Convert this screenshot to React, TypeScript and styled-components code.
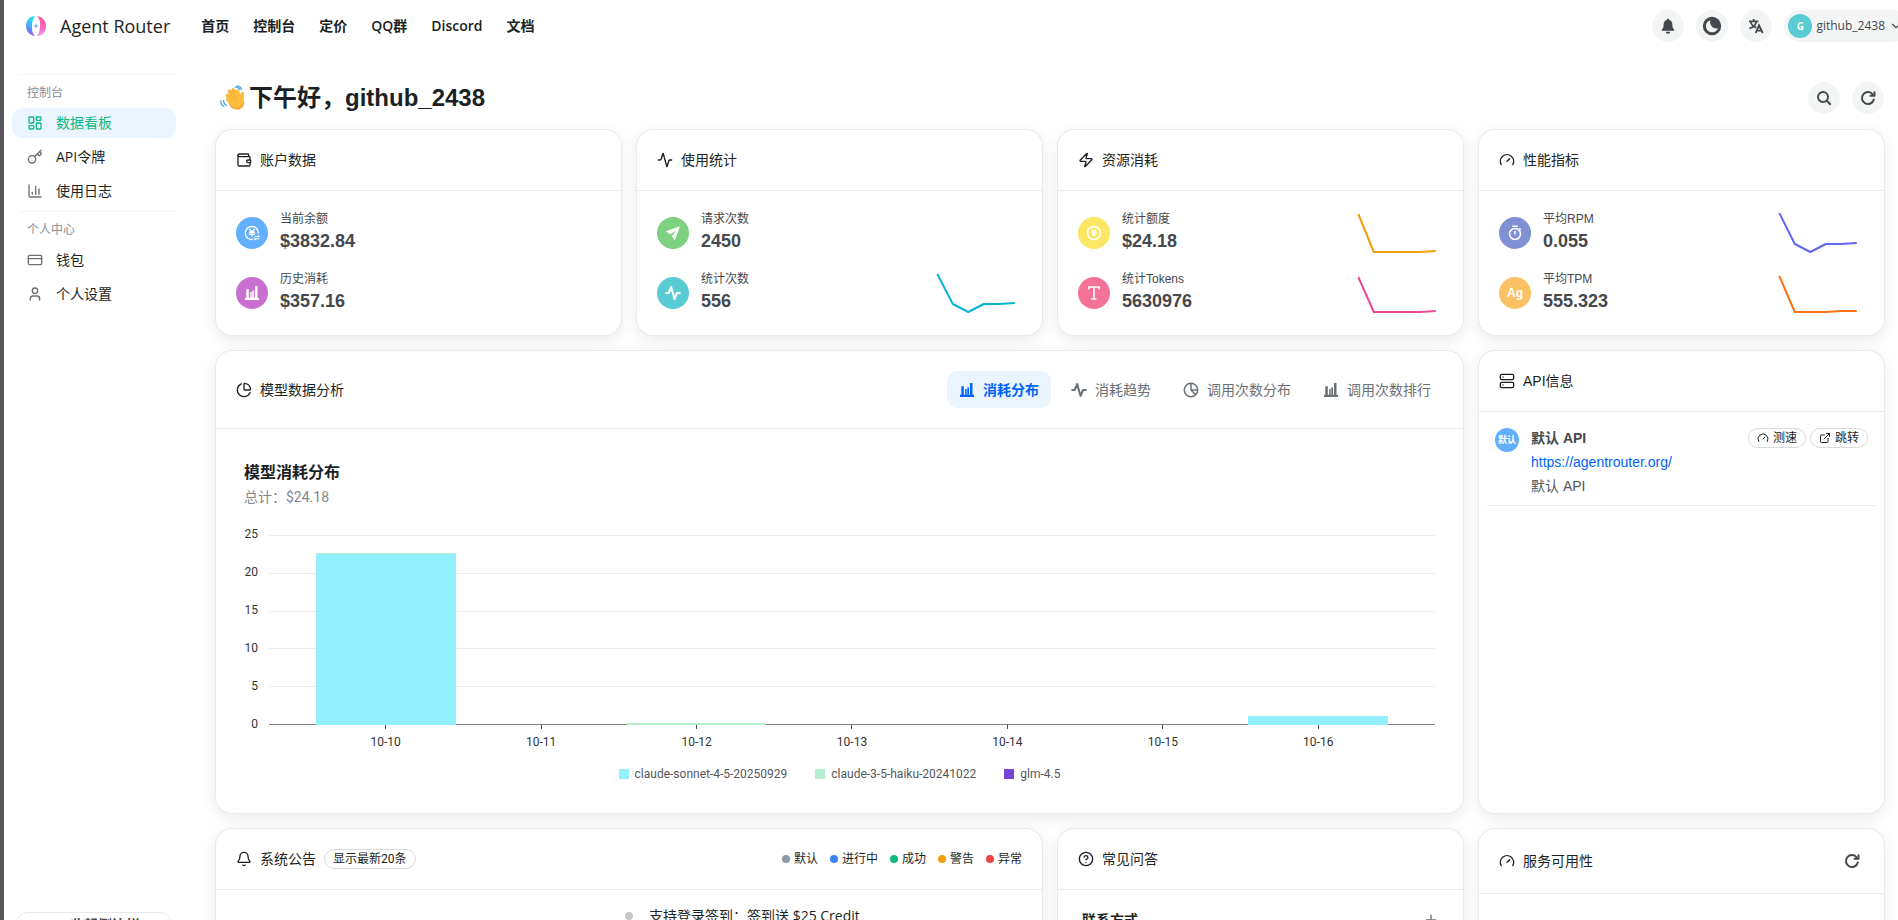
import React from "react";
import styled, { createGlobalStyle } from "styled-components";
import {
  Activity,
  Bell,
  ChartColumn,
  ChartPie,
  ChevronDown,
  ChevronLeft,
  CircleQuestionMark,
  CreditCard,
  ExternalLink,
  Gauge,
  Key,
  LayoutDashboard,
  Plus,
  Server,
  User,
  Wallet,
  Zap,
} from "lucide-react";

const sans = `"Liberation Sans", "Noto Sans CJK SC", sans-serif`;
const ui = `"Open Sans", "Noto Sans CJK SC", sans-serif`;
const chartFont = `Roboto, "Noto Sans CJK SC", sans-serif`;

const GlobalStyle = createGlobalStyle`
  * { box-sizing: border-box; }
  body { margin: 0; background: #fff; color: #1c1f23; font: 400 14px/20px ${sans}; }
  button { font: inherit; color: inherit; background: none; border: 0; padding: 0; cursor: pointer; }
  a { color: inherit; text-decoration: none; }
  h1, h2, h3, p, ul, dl, dd { margin: 0; padding: 0; font: inherit; list-style: none; }
  svg { display: block; flex: none; }
`;

/* ---------- page frame ---------- */

const Page = styled.div`
  height: 100vh;
  overflow: hidden;
  border-left: 4px solid #57565c;
`;

const Header = styled.header`
  display: flex;
  align-items: center;
  height: 52px;
  padding-left: 20px;
  font-family: ${ui};
`;

const Brand = styled.a`
  display: flex;
  align-items: center;
  gap: 12px;
  font-size: 18px;
  line-height: 24px;
  font-weight: 500;
`;

const TopNav = styled.nav`
  display: flex;
  gap: 24px;
  margin-left: 31px;
  font-weight: 600;
  font-size: 14px;
`;

const HeaderActions = styled.div`
  display: flex;
  gap: 12px;
  margin-left: auto;
  margin-right: -10px;
`;

const RoundButton = styled.button`
  display: flex;
  align-items: center;
  justify-content: center;
  width: 32px;
  height: 32px;
  border-radius: 50%;
  background: #f3f5f5;
  color: #45484c;
`;

const UserButton = styled.button`
  display: flex;
  align-items: center;
  gap: 4px;
  height: 32px;
  padding: 0 5px 0 4px;
  border-radius: 16px;
  background: #f3f5f5;
  color: #45484c;
  font-size: 12px;
  font-weight: 500;
`;

const Avatar = styled.span<{ $size: number; $color: string; $font?: number }>`
  display: flex;
  align-items: center;
  justify-content: center;
  flex: none;
  width: ${(p) => p.$size}px;
  height: ${(p) => p.$size}px;
  border-radius: 50%;
  background: ${(p) => p.$color};
  color: #fff;
  font-size: ${(p) => p.$font ?? 12}px;
  font-weight: 700;
`;

const Columns = styled.div`
  display: flex;
`;

/* ---------- sidebar ---------- */

const Sidebar = styled.aside`
  flex: none;
  width: 180px;
  padding: 22px 8px 0;
  font-family: ${ui};
`;

const SideMenu = styled.nav`
  display: grid;
  align-content: start;
  gap: 1px;
  min-height: calc(100vh - 82px);
`;

const SideGroup = styled.section`
  border-top: 1px solid #f5f5f6;
  margin-left: 8px;
  padding-top: 8px;
`;

const SideLabel = styled.h2`
  padding: 0 7px;
  margin-bottom: 5px;
  font-size: 12px;
  color: #888d92;
`;

const SideLink = styled.a<{ $active?: boolean }>`
  display: flex;
  align-items: center;
  gap: 13px;
  height: 30px;
  margin: 0 0 4px -8px;
  padding-left: 15px;
  border-radius: 10px;
  background: ${(p) => (p.$active ? "#eaf5ff" : "transparent")};
  color: ${(p) => (p.$active ? "#10b981" : "#1c1f23")};
  svg { color: ${(p) => (p.$active ? "#10b981" : "#6b7075")}; }
`;

const CollapseButton = styled.button`
  display: flex;
  align-items: center;
  justify-content: center;
  gap: 6px;
  width: 156px;
  height: 26px;
  margin-left: 4px;
  border: 1px solid #e6e8ea;
  border-radius: 12px;
  font-weight: 600;
  color: #45484c;
`;

/* ---------- main area ---------- */

const Main = styled.main`
  flex: 1;
  min-width: 0;
  padding: 30px 14px 0 32px;
`;

const Greeting = styled.div`
  display: flex;
  align-items: center;
  gap: 12px;
  margin-bottom: 16px;
`;

const GreetingTitle = styled.h1`
  display: flex;
  align-items: center;
  gap: 4px;
  margin-right: auto;
  padding-left: 3px;
  font-size: 24px;
  line-height: 32px;
  font-weight: 700;
`;

const CardGrid = styled.div`
  display: grid;
  grid-template-columns: repeat(4, minmax(0, 1fr));
  gap: 16px;
`;

const Card = styled.section<{ $span?: number }>`
  grid-column: span ${(p) => p.$span ?? 1};
  border-radius: 16px;
  background: #fff;
  box-shadow: 0 0 0 1px #e9eaea, 0 4px 16px rgba(0, 0, 0, 0.09);
`;

const CardHeader = styled.header`
  display: flex;
  align-items: center;
  justify-content: space-between;
  padding: 20px;
  border-bottom: 1px solid #e9eaeb;
`;

const CardTitle = styled.h2`
  display: flex;
  align-items: center;
  gap: 8px;
`;

const StatList = styled.dl`
  display: grid;
  gap: 16px;
  padding: 20px;
`;

const StatRow = styled.div`
  display: flex;
  align-items: center;
  gap: 12px;
  height: 44px;
`;

const StatText = styled.div`
  flex: 1;
  color: #45484c;
  dt { font-size: 12px; line-height: 16px; }
  dd { font-size: 18px; line-height: 28px; font-weight: 700; }
`;

/* ---------- model analysis ---------- */

const Tabs = styled.div`
  display: flex;
  gap: 8px;
`;

const Tab = styled.button<{ $active?: boolean }>`
  display: flex;
  align-items: center;
  gap: 8px;
  height: 37px;
  padding: 0 12px;
  border-radius: 10px;
  background: ${(p) => (p.$active ? "#eaf5ff" : "transparent")};
  color: ${(p) => (p.$active ? "#0064fa" : "#6b7075")};
  font-weight: ${(p) => (p.$active ? 700 : 400)};
`;

const ChartBody = styled.div`
  padding: 32px 28px 31px;
  font-family: ${chartFont};
`;

const ChartTitle = styled.h3`
  font-size: 16px;
  line-height: 24px;
  font-weight: 700;
`;

const ChartSubtitle = styled.p`
  margin: 1px 0 27px;
  line-height: 22px;
  color: #84878b;
`;

const Plot = styled.div`
  display: grid;
  grid-template-columns: 14px minmax(0, 1fr);
  column-gap: 11px;
  font-size: 12px;
  line-height: 16px;
`;

const YAxis = styled.div`
  display: flex;
  flex-direction: column;
  justify-content: space-between;
  margin: -9px 0 -7px;
  text-align: right;
  color: #333;
`;

const PlotArea = styled.div`
  display: grid;
  height: 190px;
  > * { grid-area: 1 / 1; }
`;

const GridLines = styled.div`
  display: flex;
  flex-direction: column;
  justify-content: space-between;
  i { height: 1px; background: #ececed; }
  i:last-child { background: #7f8184; }
`;

const Bands = styled.div`
  display: flex;
  padding: 0 39px;
`;

const Band = styled.div`
  flex: 1;
  display: flex;
  flex-direction: column;
  align-items: center;
  justify-content: flex-end;
`;

const Bar = styled.div<{ $color: string }>`
  flex: none;
  width: 90%;
  min-height: 1px;
  background: ${(p) => p.$color};
`;

const XLabels = styled(Bands)`
  grid-column: 2;
`;

const XLabel = styled.span`
  flex: 1;
  display: flex;
  flex-direction: column;
  align-items: center;
  gap: 5px;
  color: #333;
  &::before { content: ""; width: 1px; height: 4px; background: #45484c; }
`;

const ChartLegend = styled.ul`
  display: flex;
  justify-content: center;
  gap: 28px;
  margin-top: 16px;
  font-size: 12px;
  line-height: 16px;
  color: #55585c;
  li { display: flex; align-items: center; gap: 6px; }
`;

const Swatch = styled.i<{ $color: string }>`
  width: 10px;
  height: 10px;
  background: ${(p) => p.$color};
`;

/* ---------- API info ---------- */

const ApiItem = styled.div`
  display: flex;
  gap: 12px;
  margin: 8px;
  padding: 8px 8px 9px;
  border-bottom: 1px solid #e9eaeb;
`;

const ApiText = styled.div`
  flex: 1;
  display: grid;
  gap: 4px;
  color: #55585c;
  strong { color: #45484c; }
  a { color: #0064fa; }
`;

const TagRow = styled.div`
  display: flex;
  gap: 4px;
`;

const Tag = styled.button`
  display: flex;
  align-items: center;
  gap: 4px;
  height: 20px;
  padding: 0 8px;
  border: 1px solid #d8dadc;
  border-radius: 10px;
  background: #fff;
  font-family: ${chartFont};
  font-size: 12px;
  line-height: 16px;
`;

/* ---------- bottom row ---------- */

const StatusLegend = styled.ul`
  display: flex;
  gap: 12px;
  font-size: 12px;
  line-height: 16px;
  li { display: flex; align-items: center; gap: 4px; }
`;

const Dot = styled.i<{ $color: string }>`
  width: 8px;
  height: 8px;
  border-radius: 50%;
  background: ${(p) => p.$color};
`;

const Timeline = styled.ul`
  display: grid;
  grid-template-columns: 1fr 1fr;
  height: 400px;
  padding: 16px 20px;
  font-family: ${ui};
  li { grid-column: 2; display: flex; align-items: center; gap: 16px; height: 20px; margin-left: -4px; }
`;

const FaqItem = styled.button`
  display: flex;
  align-items: center;
  justify-content: space-between;
  width: 100%;
  padding: 20px 24px;
  font-weight: 700;
  svg { color: #6b7075; }
`;

const PlainIconButton = styled.button`
  display: flex;
  align-items: center;
  justify-content: center;
  width: 24px;
  height: 24px;
  color: #45484c;
`;

/* ---------- drawings ---------- */

const Logo = () => (
  <svg width="24" height="24" viewBox="0 0 24 24" fill="none" aria-hidden="true">
    <defs>
      <linearGradient id="logoLeft" x1="0" y1="0" x2="0" y2="1">
        <stop offset="0" stopColor="#2fe3f2" />
        <stop offset="0.5" stopColor="#4aa8fb" />
        <stop offset="1" stopColor="#9a4df5" />
      </linearGradient>
      <linearGradient id="logoRight" x1="0" y1="0" x2="0" y2="1">
        <stop offset="0" stopColor="#fb5b9b" />
        <stop offset="0.6" stopColor="#fd63c4" />
        <stop offset="1" stopColor="#f09cf5" />
      </linearGradient>
    </defs>
    <path d="M11.300 2C5.500 2 2 6.500 2 12c0 5 3.200 9.300 8.800 10C8.300 19 7.600 15.500 7.900 12 8.200 8 9 4.500 11.300 2z" fill="url(#logoLeft)" />
    <path d="M12.700 22c5.800 0 9.300-4.500 9.300-10 0-5-3.200-9.300-8.800-10 2.500 3 3.200 6.500 2.900 10-.3 4-1.100 7.500-3.400 10z" fill="url(#logoRight)" />
    <path d="M12 9.300l.8 1.900 1.900.8-1.900.8-.8 1.900-.8-1.900-1.900-.8 1.900-.8z" fill="#6fb8fb" />
  </svg>
);

const WaveHand = () => (
  <svg width="26" height="26" viewBox="0 0 26 26" fill="none" aria-hidden="true">
    <g stroke="#f9b233" strokeWidth="3.600" strokeLinecap="round">
      <path d="M8.500 10.500l7 8" />
      <path d="M10.500 6.500l7 9" />
      <path d="M14 5l6 9" />
      <path d="M18 6.500l3.500 7" />
    </g>
    <path d="M9 12l9-5.500 3 3 1.500-2.500c.6-1 2.400-.6 2.400 1 0 2.500-.2 4.500.1 7.500.4 4.500-3 8.500-7 8.500-3.500 0-5.500-1.500-7.500-4.500-1-1.500-2.500-3-3.500-4.500-.8-1.200.6-2.600 1.800-2z" fill="#fcbe3a" />
    <path d="M10.500 19.500c2 3 4 4.500 7.500 4.500 3.500 0 6.500-3 7-7" stroke="#f0952b" strokeWidth="1.200" />
    <path d="M12 10.500l4.500 5.500M14.500 8.500l4 5" stroke="#ea9a2c" strokeWidth="0.700" />
    <g stroke="#4aa3df" strokeWidth="1.200" strokeLinecap="round">
      <path d="M16 2c2.500 0 4 1 5 3M18 0.800c2.500.3 3.800 1.500 4.500 3.500" />
      <path d="M4.500 15.500c0 2.500 1 4 3 5M2 15.500c-.3 2.800 1 5 3 6" />
    </g>
  </svg>
);

const SolidBell = () => (
  <svg width="16" height="16" viewBox="0 0 24 24" fill="currentColor" aria-hidden="true">
    <path d="M12 1c.9 0 1.600.7 1.600 1.500C16.800 3.300 18.500 6 18.500 9.500c0 4.500 1 6 2.700 7.700.6.700.2 1.800-.8 1.800H3.600c-1 0-1.400-1.100-.8-1.800C4.500 15.500 5.500 14 5.500 9.500c0-3.500 1.700-6.200 4.900-7C10.400 1.700 11.100 1 12 1z" />
    <path d="M8.500 20.500h7a3.500 3 0 0 1-7 0z" />
  </svg>
);

const SolidMoon = () => (
  <svg width="20" height="20" viewBox="0 0 20 20" aria-hidden="true">
    <circle cx="10" cy="10" r="9.200" fill="currentColor" />
    <path d="M8.300 4.200A6.200 6.200 0 1 0 16 12.200 6.400 6.400 0 0 1 8.300 4.200z" fill="#f3f5f5" />
  </svg>
);

const Translate = () => (
  <svg width="16" height="16" viewBox="0 0 24 24" fill="none" stroke="currentColor" strokeWidth="2.600" aria-hidden="true">
    <path d="M1.500 5h14M8.500 1.500V5M4 6c1 3.500 4 7 8.500 8.500M12.500 6C11.500 9.500 8 14 2 15.500" />
    <path d="M11.500 22.500L16.500 11l5.500 11.500M13.500 19h6.500" strokeWidth="2.800" />
  </svg>
);

const SearchIcon = () => (
  <svg width="16" height="16" viewBox="0 0 16 16" fill="none" stroke="currentColor" strokeWidth="1.900" strokeLinecap="round" aria-hidden="true">
    <circle cx="7" cy="7" r="5" />
    <path d="M10.800 10.800L14 14" strokeWidth="2.200" />
  </svg>
);

const Refresh = () => (
  <svg width="16" height="16" viewBox="0 0 16 16" fill="none" stroke="currentColor" strokeWidth="2" strokeLinecap="round" aria-hidden="true">
    <path d="M13.800 9.500A6 6 0 1 1 12.800 4.500" />
    <path d="M14.500 2.200V5.800H10.500" strokeLinejoin="round" />
  </svg>
);

const Histogram = ({ size = 16 }: { size?: number }) => (
  <svg width={size} height={size} viewBox="0 0 16 16" fill="currentColor" aria-hidden="true">
    <path d="M2.300 4.200h2.500V13H2.300zM6.200 7h1.500V13H6.200zM8.300 5.500h1.700V13H8.300zM11 1H13.500V13H11zM1 12.800h14V15H1z" />
  </svg>
);

const Pulse = () => (
  <svg width="16" height="16" viewBox="0 0 16 16" fill="none" stroke="currentColor" strokeWidth="2" strokeLinejoin="round" strokeLinecap="round" aria-hidden="true">
    <path d="M1.200 8h2.500L6.200 2l3.300 12L12 8h2.800" />
  </svg>
);

const PieOutline = () => (
  <svg width="16" height="16" viewBox="0 0 16 16" fill="none" stroke="currentColor" strokeWidth="1.500" aria-hidden="true">
    <circle cx="8" cy="8" r="6.700" />
    <path d="M8 1.300V8l4.700 4.700M8 8h6.700" />
  </svg>
);

const MoneyExchange = () => (
  <svg width="16" height="16" viewBox="0 0 16 16" fill="none" stroke="currentColor" strokeWidth="1.400" aria-hidden="true">
    <path d="M14.300 8.500A6.500 6.500 0 1 0 9 14.400" />
    <path d="M5.300 4L8 7l2.700-3M5 7.200h6M5 9.300h6M8 7v4.500" />
    <path d="M10.500 11.800h4.800l-1.300-1.300M15.300 13.800h-4.800l1.300 1.300" strokeWidth="1.100" />
  </svg>
);

const SendIcon = () => (
  <svg width="16" height="16" viewBox="0 0 16 16" fill="currentColor" aria-hidden="true">
    <path d="M15 1.200L.8 6.300l4.400 2.900L11 5.400 6.900 11.300l2.900 3.900z" />
  </svg>
);

const Coin = () => (
  <svg width="16" height="16" viewBox="0 0 16 16" fill="none" stroke="currentColor" strokeWidth="1.500" aria-hidden="true">
    <circle cx="8" cy="8" r="6.500" />
    <path d="M6 4.800L8 7l2-2.200M5.500 7.300h5M5.500 9.200h5M8 7v4.300" />
  </svg>
);

const TextGlyph = () => (
  <svg width="16" height="16" viewBox="0 0 16 16" fill="none" stroke="currentColor" strokeWidth="1.500" aria-hidden="true">
    <path d="M2.800 4.500V2h10.400v2.500M8 2v12M5.500 14h5" />
  </svg>
);

const Stopwatch = () => (
  <svg width="16" height="16" viewBox="0 0 16 16" fill="none" stroke="currentColor" strokeWidth="1.500" aria-hidden="true">
    <circle cx="8" cy="9" r="5.500" />
    <path d="M5.300 1.200h5.400M8 5.800V9.500M12.300 3.300l1.400 1.400" />
  </svg>
);

const Spark = styled.svg.attrs({ width: 96, height: 40, viewBox: "0 0 96 40", fill: "none" })`
  overflow: hidden;
`;

const Sparkline = ({ ys, color }: { ys: number[]; color: string }) => (
  <Spark aria-hidden="true">
    <polyline
      points={ys.map((y, i) => `${11.300 + i * 15.500},${y}`).join(" ")}
      stroke={color}
      strokeWidth="2"
      strokeLinejoin="round"
    />
  </Spark>
);

/* ---------- data ---------- */

type Stat = { label: string; value: string; color: string; icon: React.ReactNode; trend?: number[]; line?: string };

const statCards: { title: string; icon: React.ReactNode; rows: Stat[] }[] = [
  {
    title: "账户数据",
    icon: <Wallet size={16} />,
    rows: [
      { label: "当前余额", value: "$3832.84", color: "#62b0fd", icon: <MoneyExchange /> },
      { label: "历史消耗", value: "$357.16", color: "#c86fd1", icon: <Histogram /> },
    ],
  },
  {
    title: "使用统计",
    icon: <Activity size={16} />,
    rows: [
      { label: "请求次数", value: "2450", color: "#7fd182", icon: <SendIcon /> },
      { label: "统计次数", value: "556", color: "#59cbd3", icon: <Pulse />, trend: [1, 31, 39, 31, 31, 30], line: "#06b6d4" },
    ],
  },
  {
    title: "资源消耗",
    icon: <Zap size={16} />,
    rows: [
      { label: "统计额度", value: "$24.18", color: "#fce663", icon: <Coin />, trend: [1, 39, 39, 39, 39, 38], line: "#f59e0b" },
      { label: "统计Tokens", value: "5630976", color: "#f47297", icon: <TextGlyph />, trend: [4, 39, 39, 39, 39, 38], line: "#ec4899" },
    ],
  },
  {
    title: "性能指标",
    icon: <Gauge size={16} />,
    rows: [
      { label: "平均RPM", value: "0.055", color: "#8090d5", icon: <Stopwatch />, trend: [0, 31, 39, 31, 31, 30], line: "#6366f1" },
      { label: "平均TPM", value: "555.323", color: "#fbc165", icon: "Ag", trend: [3, 39, 39, 39, 38, 38], line: "#f97316" },
    ],
  },
];

const CYAN = "#93efff";
const GREEN = "#b5efcf";
const VIOLET = "#7444d8";

const days = [
  { day: "10-10", parts: [{ v: 0.1, c: GREEN }, { v: 22.500, c: CYAN }] },
  { day: "10-11", parts: [] },
  { day: "10-12", parts: [{ v: 0.2, c: GREEN }] },
  { day: "10-13", parts: [] },
  { day: "10-14", parts: [] },
  { day: "10-15", parts: [] },
  { day: "10-16", parts: [{ v: 1.250, c: CYAN }] },
];

const navLinks = ["首页", "控制台", "定价", "QQ群", "Discord", "文档"];

const statuses = [
  ["默认", "#8b9aa7"],
  ["进行中", "#3b82f6"],
  ["成功", "#10b981"],
  ["警告", "#f59e0b"],
  ["异常", "#ef4444"],
];

/* ---------- page ---------- */

export default function App() {
  return (
    <Page>
      <GlobalStyle />
      <Header>
        <Brand href="#">
          <Logo />
          Agent Router
        </Brand>
        <TopNav>
          {navLinks.map((l) => (
            <a key={l} href="#">{l}</a>
          ))}
        </TopNav>
        <HeaderActions>
          <RoundButton aria-label="系统公告"><SolidBell /></RoundButton>
          <RoundButton aria-label="切换主题"><SolidMoon /></RoundButton>
          <RoundButton aria-label="语言"><Translate /></RoundButton>
          <UserButton>
            <Avatar $size={24} $color="#59cbd3" $font={10}>G</Avatar>
            github_2438
            <ChevronDown size={14} />
          </UserButton>
        </HeaderActions>
      </Header>
      <Columns>
        <Sidebar>
          <SideMenu>
            <SideGroup>
              <SideLabel>控制台</SideLabel>
              <SideLink href="#" $active><LayoutDashboard size={16} />数据看板</SideLink>
              <SideLink href="#"><Key size={16} />API令牌</SideLink>
              <SideLink href="#"><ChartColumn size={16} />使用日志</SideLink>
            </SideGroup>
            <SideGroup>
              <SideLabel>个人中心</SideLabel>
              <SideLink href="#"><CreditCard size={16} />钱包</SideLink>
              <SideLink href="#"><User size={16} />个人设置</SideLink>
            </SideGroup>
          </SideMenu>
          <CollapseButton><ChevronLeft size={16} />收起侧边栏</CollapseButton>
        </Sidebar>
        <Main>
          <Greeting>
            <GreetingTitle><WaveHand />下午好，github_2438</GreetingTitle>
            <RoundButton aria-label="搜索"><SearchIcon /></RoundButton>
            <RoundButton aria-label="刷新"><Refresh /></RoundButton>
          </Greeting>
          <CardGrid>
            {statCards.map((c) => (
              <Card key={c.title}>
                <CardHeader><CardTitle>{c.icon}{c.title}</CardTitle></CardHeader>
                <StatList>
                  {c.rows.map((r) => (
                    <StatRow key={r.label}>
                      <Avatar $size={32} $color={r.color}>{r.icon}</Avatar>
                      <StatText>
                        <dt>{r.label}</dt>
                        <dd>{r.value}</dd>
                      </StatText>
                      {r.trend && <Sparkline ys={r.trend} color={r.line!} />}
                    </StatRow>
                  ))}
                </StatList>
              </Card>
            ))}

            <Card $span={3}>
              <CardHeader>
                <CardTitle><ChartPie size={16} />模型数据分析</CardTitle>
                <Tabs>
                  <Tab $active><Histogram />消耗分布</Tab>
                  <Tab><Pulse />消耗趋势</Tab>
                  <Tab><PieOutline />调用次数分布</Tab>
                  <Tab><Histogram />调用次数排行</Tab>
                </Tabs>
              </CardHeader>
              <ChartBody>
                <ChartTitle>模型消耗分布</ChartTitle>
                <ChartSubtitle>总计：$24.18</ChartSubtitle>
                <Plot>
                  <YAxis>
                    {[25, 20, 15, 10, 5, 0].map((n) => <span key={n}>{n}</span>)}
                  </YAxis>
                  <PlotArea>
                    <GridLines><i /><i /><i /><i /><i /><i /></GridLines>
                    <Bands>
                      {days.map((d) => (
                        <Band key={d.day}>
                          {d.parts.map((p) => (
                            <Bar key={p.c} $color={p.c} style={{ height: `${(p.v / 25) * 100}%` }} />
                          ))}
                        </Band>
                      ))}
                    </Bands>
                  </PlotArea>
                  <XLabels>
                    {days.map((d) => <XLabel key={d.day}>{d.day}</XLabel>)}
                  </XLabels>
                </Plot>
                <ChartLegend>
                  <li><Swatch $color={CYAN} />claude-sonnet-4-5-20250929</li>
                  <li><Swatch $color={GREEN} />claude-3-5-haiku-20241022</li>
                  <li><Swatch $color={VIOLET} />glm-4.5</li>
                </ChartLegend>
              </ChartBody>
            </Card>

            <Card>
              <CardHeader><CardTitle><Server size={16} />API信息</CardTitle></CardHeader>
              <ApiItem>
                <Avatar $size={24} $color="#62b0fd" $font={9}>默认</Avatar>
                <ApiText>
                  <strong>默认 API</strong>
                  <a href="https://agentrouter.org/">https://agentrouter.org/</a>
                  <span>默认 API</span>
                </ApiText>
                <TagRow>
                  <Tag><Gauge size={12} />测速</Tag>
                  <Tag><ExternalLink size={12} />跳转</Tag>
                </TagRow>
              </ApiItem>
            </Card>

            <Card $span={2}>
              <CardHeader>
                <CardTitle><Bell size={16} />系统公告 <Tag as="span">显示最新20条</Tag></CardTitle>
                <StatusLegend>
                  {statuses.map(([name, color]) => (
                    <li key={name}><Dot $color={color} />{name}</li>
                  ))}
                </StatusLegend>
              </CardHeader>
              <Timeline>
                <li><Dot $color="#c6cacd" />支持登录签到：签到送 $25 Credit</li>
              </Timeline>
            </Card>
            <Card>
              <CardHeader><CardTitle><CircleQuestionMark size={16} />常见问答</CardTitle></CardHeader>
              <FaqItem>联系方式<Plus size={16} /></FaqItem>
            </Card>
            <Card>
              <CardHeader>
                <CardTitle><Gauge size={16} />服务可用性</CardTitle>
                <PlainIconButton aria-label="刷新"><Refresh /></PlainIconButton>
              </CardHeader>
            </Card>
          </CardGrid>
        </Main>
      </Columns>
    </Page>
  );
}
